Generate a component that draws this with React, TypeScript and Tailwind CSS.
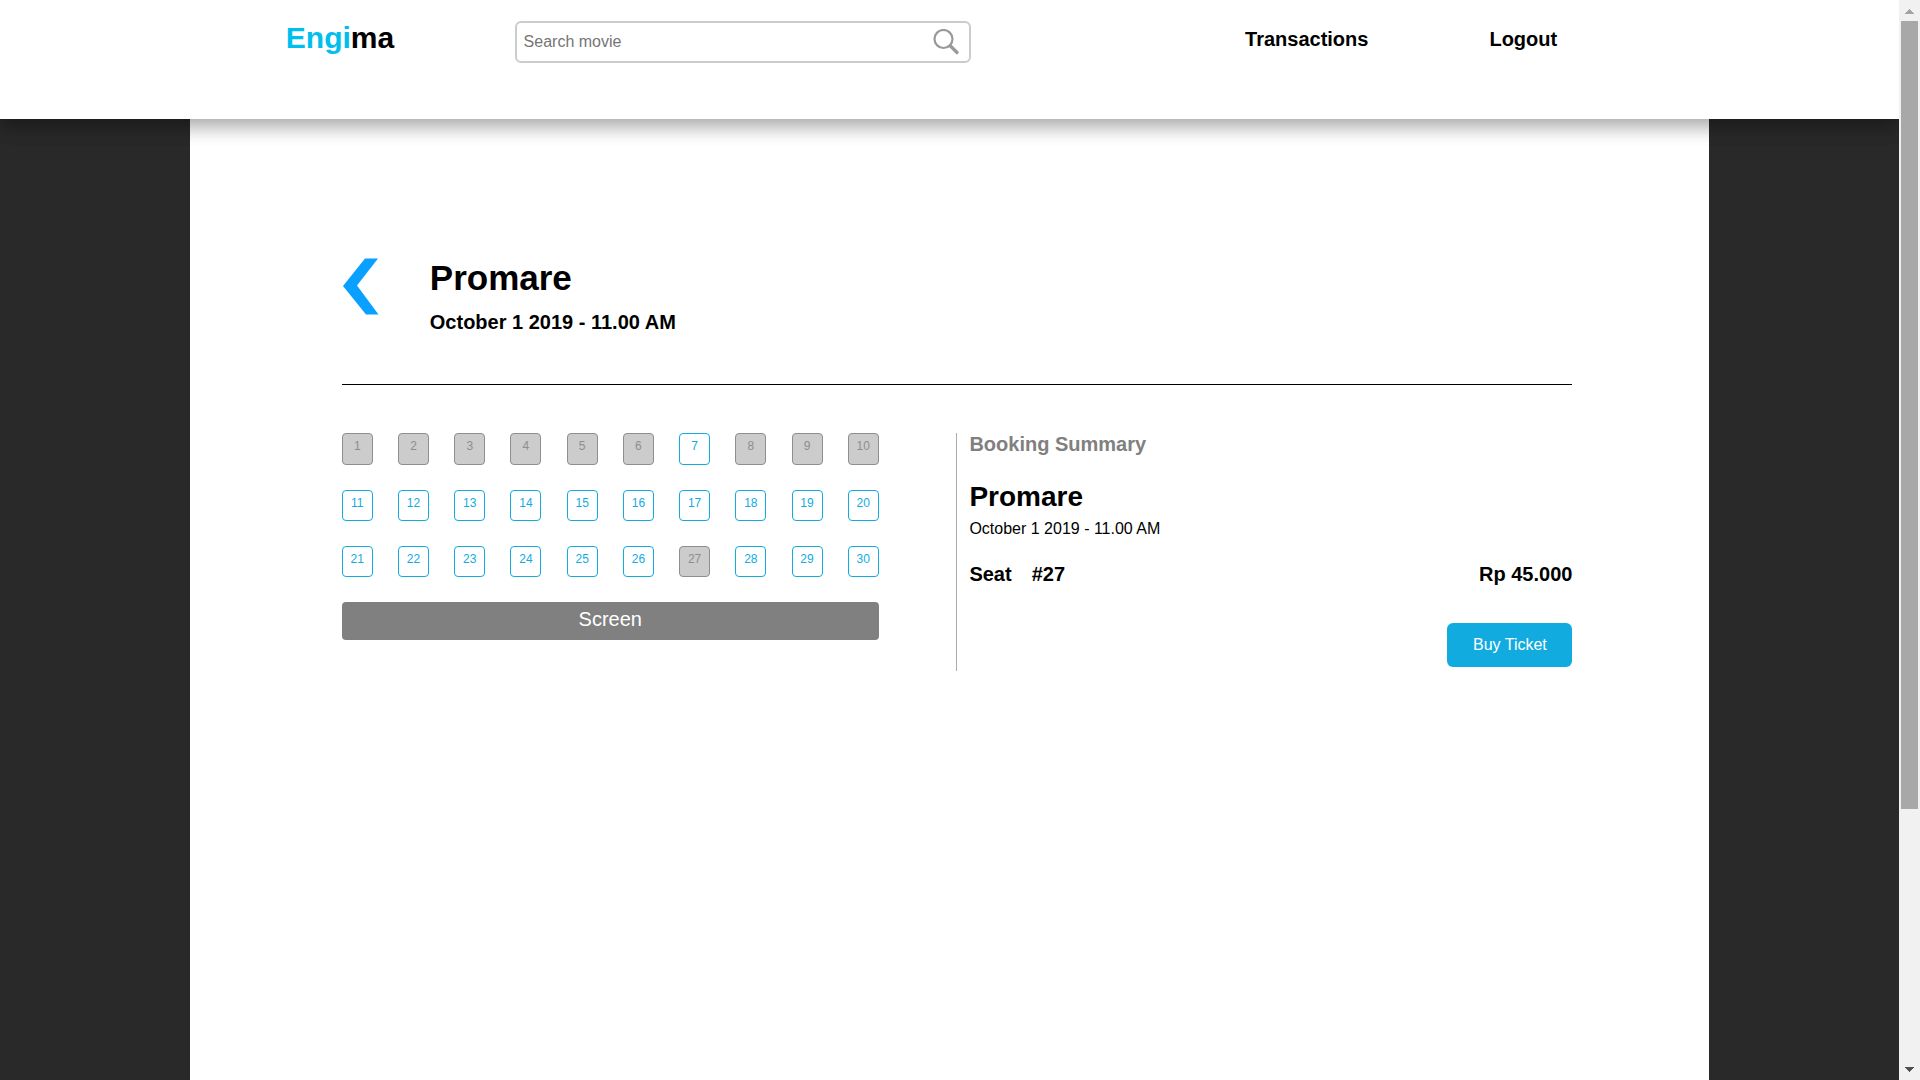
const TAKEN = new Set([1, 2, 3, 4, 5, 6, 8, 9, 10, 27]);
const SEATS = Array.from({ length: 30 }, (_, i) => i + 1);

function Header() {
  return (
    <header className="relative z-10 flex h-[119px] items-start bg-white shadow-[0_8px_17px_0_rgba(0,0,0,0.2),0_6px_20px_0_rgba(0,0,0,0.19)]">
      <a href="#" className="ml-[15%] mt-5 w-[12.1%] shrink-0 pl-px text-[30px] leading-9 font-bold">
        <span className="text-[#00bfee]">Engi</span>ma
      </a>
      <form className="mt-[21px] flex h-[42px] w-[24.05%] items-center rounded-md border-2 border-[#ccc] pl-[7px] pr-2.5">
        <input
          type="text"
          aria-label="Search movie"
          placeholder="Search movie"
          className="min-w-0 flex-1 bg-transparent text-base leading-5 text-black outline-none placeholder:text-[#757575]"
        />
        <button type="button" aria-label="Search" className="shrink-0">
          <svg viewBox="0 0 26 26" className="size-[26px]" fill="none" stroke="#999" aria-hidden="true">
            <circle cx="10.5" cy="10" r="9" strokeWidth="2.2" />
            <path d="M17.5 17 24 23.500" strokeWidth="3.2" strokeLinecap="round" />
          </svg>
        </button>
      </form>
      <nav className="mr-[18%] mt-[27px] flex flex-1 justify-end gap-[121px] text-xl leading-6 font-bold">
        <a href="#">Transactions</a>
        <a href="#">Logout</a>
      </nav>
    </header>
  );
}

function Seat({ number, taken }: { number: number; taken: boolean }) {
  return (
    <button
      type="button"
      disabled={taken}
      className={
        taken
          ? "flex h-full w-[31px] justify-center rounded border border-[#8e8e8e] bg-[#ccc] pt-1 text-xs leading-4 text-[#8e8e8e]"
          : "flex h-full w-[31px] justify-center rounded border border-[#12abdf] bg-white pt-1 text-xs leading-4 text-[#12abdf]"
      }
    >
      {number}
    </button>
  );
}

function SeatMap() {
  const rows = [SEATS.slice(0, 10), SEATS.slice(10, 20), SEATS.slice(20, 30)];
  return (
    <section aria-label="Seats" className="flex w-[537px] flex-col gap-[25px]">
      {rows.map((row) => (
        <div key={row[0]} className="flex h-[31px] justify-between first:h-8">
          {row.map((n) => (
            <Seat key={n} number={n} taken={TAKEN.has(n)} />
          ))}
        </div>
      ))}
      <div className="h-[38px] rounded bg-[#808080] pt-[5px] text-center text-xl leading-6 text-white">Screen</div>
    </section>
  );
}

function BookingSummary() {
  return (
    <section className="w-[616px] border-l border-[#aaa] pb-1 pl-3">
      <h2 className="text-xl leading-[22px] font-bold text-[#808080]">Booking Summary</h2>
      <h3 className="mt-[26px] text-[28px] leading-8 font-bold">Promare</h3>
      <p className="mt-1.5 text-base leading-5">October 1 2019 - 11.00 AM</p>
      <div className="mt-[23px] flex justify-between text-xl leading-6 font-bold">
        <div className="flex gap-5">
          <span>Seat</span>
          <span>#27</span>
        </div>
        <span>Rp 45.000</span>
      </div>
      <div className="mt-[37px] flex justify-end">
        <button type="button" className="h-11 min-w-[125px] rounded-md bg-[#12abdf] px-6 text-base leading-5 text-white">
          Buy Ticket
        </button>
      </div>
    </section>
  );
}

function Scrollbar() {
  return (
    <div className="flex w-[21px] shrink-0 flex-col items-center bg-[#f1f1f1]" aria-hidden="true">
      <div className="flex h-[21px] items-center justify-center">
        <svg viewBox="0 0 9 5" className="mt-0.5 h-[5px] w-[9px]" shapeRendering="crispEdges">
          <path d="M0 5 4.500 0 9 5Z" fill="#a3a3a3" />
        </svg>
      </div>
      <div className="flex w-[17px] flex-1 flex-col">
        <div className="h-[75.9%] bg-[#a8a8a8]" />
      </div>
      <div className="flex h-[21px] items-center justify-center">
        <svg viewBox="0 0 9 5" className="h-[5px] w-[9px]" shapeRendering="crispEdges">
          <path d="M0 0 4.500 5 9 0Z" fill="#505050" />
        </svg>
      </div>
    </div>
  );
}

export default function App() {
  return (
    <div className="flex h-screen overflow-hidden font-['Liberation_Sans',Arial,sans-serif] text-black">
      <div className="flex min-w-0 flex-1 flex-col overflow-hidden bg-[#292929]">
        <Header />
        <main className="mx-[10%] flex-1 bg-white pl-[8%] pr-[7.2%] pt-[139px]">
          <div className="flex items-start gap-[51px] border-b border-black pb-[50px]">
            <a href="#" aria-label="Back" className="ml-px shrink-0">
              <svg viewBox="0 0 36 57" className="h-[57px] w-9" aria-hidden="true">
                <path d="M22 .5H35L14 27.500 35.500 56.500H23L0 28Z" fill="#0aa0ff" />
              </svg>
            </a>
            <div>
              <h1 className="text-[35px] leading-10 font-bold">Promare</h1>
              <p className="mt-3 text-xl leading-6 font-bold">October 1 2019 - 11.00 AM</p>
            </div>
          </div>
          <div className="mt-12 flex justify-between">
            <SeatMap />
            <BookingSummary />
          </div>
        </main>
      </div>
      <Scrollbar />
    </div>
  );
}
